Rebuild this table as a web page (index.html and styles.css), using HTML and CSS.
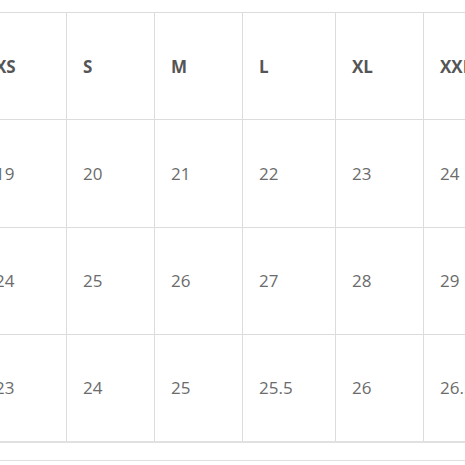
FILE: index.html
```html
<!DOCTYPE html>
<html>
<head>
<meta charset="utf-8">
<link rel="stylesheet" href="styles.css">
</head>
<body>
<div class="wrap">
  <table class="sizes">
    <tr class="head">
      <th>XS</th><th>S</th><th>M</th><th>L</th><th>XL</th><th>XXL</th>
    </tr>
    <tr>
      <td>19</td><td>20</td><td>21</td><td>22</td><td>23</td><td>24</td>
    </tr>
    <tr>
      <td>24</td><td>25</td><td>26</td><td>27</td><td>28</td><td>29</td>
    </tr>
    <tr class="last">
      <td>23</td><td>24</td><td>25</td><td>25.5</td><td>26</td><td>26.5</td>
    </tr>
  </table>
</div>
</body>
</html>
```

FILE: styles.css
```css
html, body {
  margin: 0;
  padding: 0;
  background: #fff;
}
body {
  font-family: "Open Sans", "Noto Sans", sans-serif;
  overflow: hidden;
}
.wrap {
  margin-top: 12px;
  padding-bottom: 17px;
  border-bottom: 1px solid #e0e0e0;
  overflow: hidden;
  width: 465px;
}
.sizes {
  border-collapse: collapse;
  margin-left: -22px;
  border-top: 1px solid #dcdcdc;
  border-bottom: 2px solid #e0e0e0;
  table-layout: fixed;
  width: 528px;
}
.sizes tr {
  height: 107.3px;
}
.sizes th, .sizes td {
  border-left: 1px solid #dcdcdc;
  border-right: 1px solid #dcdcdc;
  border-top: 1px solid #dcdcdc;
  padding: 0 16px;
  text-align: left;
  vertical-align: middle;
  font-size: 17px;
  white-space: nowrap;
}
.sizes th {
  font-weight: 700;
  color: #555555;
}
.sizes td {
  font-weight: 400;
  color: #6b6b6b;
}
.sizes th:nth-child(1), .sizes td:nth-child(1) { width: 55px; }
.sizes th:nth-child(2), .sizes td:nth-child(2) { width: 55px; }
.sizes th:nth-child(3), .sizes td:nth-child(3) { width: 55px; }
.sizes th:nth-child(4), .sizes td:nth-child(4) { width: 60px; }
.sizes th:nth-child(5), .sizes td:nth-child(5) { width: 55px; }
.sizes th:nth-child(6), .sizes td:nth-child(6) { width: 55px; }
```
